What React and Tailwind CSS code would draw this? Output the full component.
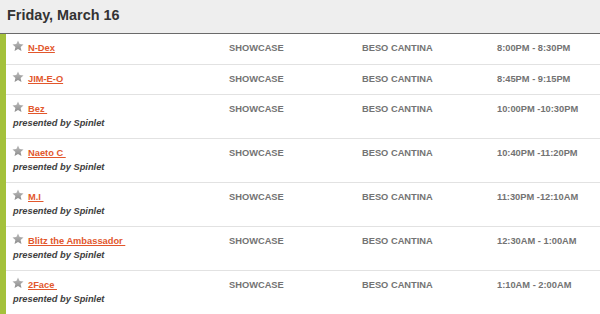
import React from 'react'

const rows = [
  { name: 'N-Dex', time: '8:00PM - 8:30PM' },
  { name: 'JIM-E-O', time: '8:45PM - 9:15PM' },
  { name: 'Bez ', time: '10:00PM -10:30PM', by: 'Spinlet' },
  { name: 'Naeto C ', time: '10:40PM -11:20PM', by: 'Spinlet' },
  { name: 'M.I ', time: '11:30PM -12:10AM', by: 'Spinlet' },
  { name: 'Blitz the Ambassador ', time: '12:30AM - 1:00AM', by: 'Spinlet' },
  { name: '2Face ', time: '1:10AM - 2:00AM', by: 'Spinlet' },
]

function Star() {
  return (
    <svg width="12" height="12" viewBox="0 0 24 24" className="shrink-0 -mt-[5px] mr-[4px] -ml-[1px]">
      <defs>
        <linearGradient id="starg" x1="0" y1="0" x2="0" y2="1">
          <stop offset="0" stopColor="#bdbdbd" />
          <stop offset="1" stopColor="#8c8c8c" />
        </linearGradient>
      </defs>
      <path
        d="M12 1l3.3 7.2 7.7.8-5.8 5.2 1.7 7.7L12 18l-6.9 3.9 1.7-7.7L1 9l7.7-.8z"
        fill="url(#starg)"
      />
    </svg>
  )
}

export default function App() {
  return (
    <div className="w-[600px] h-[314px] overflow-hidden bg-white font-['Liberation_Sans',Arial,sans-serif]">
      <div className="h-[34px] bg-[#eeeeee] border-b border-[#6a6a6a] pl-[7px] flex items-center">
        <h2 className="text-[14.4px] font-bold text-[#333333] leading-none -mt-[3px]">Friday, March 16</h2>
      </div>
      <div className="border-l-[6px] border-[#a4c13b]">
        {rows.map((r, i) => (
          <div
            key={i}
            className="flex border-b border-[#e2e2e2] pt-[8px] pb-[8px] text-[9.3px] font-bold leading-[13.5px]"
          >
            <div className="w-[223px] pl-[7px]">
              <div className="flex items-center">
                <Star />
                <a href="#" className="text-[#e2572c] underline whitespace-pre">{r.name}</a>
              </div>
              {r.by && (
                <div className="italic text-[#404040]">presented by {r.by}</div>
              )}
            </div>
            <div className="w-[133px] text-[#737373]">SHOWCASE</div>
            <div className="w-[135px] text-[#737373]">BESO CANTINA</div>
            <div className="flex-1 text-[#737373]">{r.time}</div>
          </div>
        ))}
      </div>
    </div>
  )
}
